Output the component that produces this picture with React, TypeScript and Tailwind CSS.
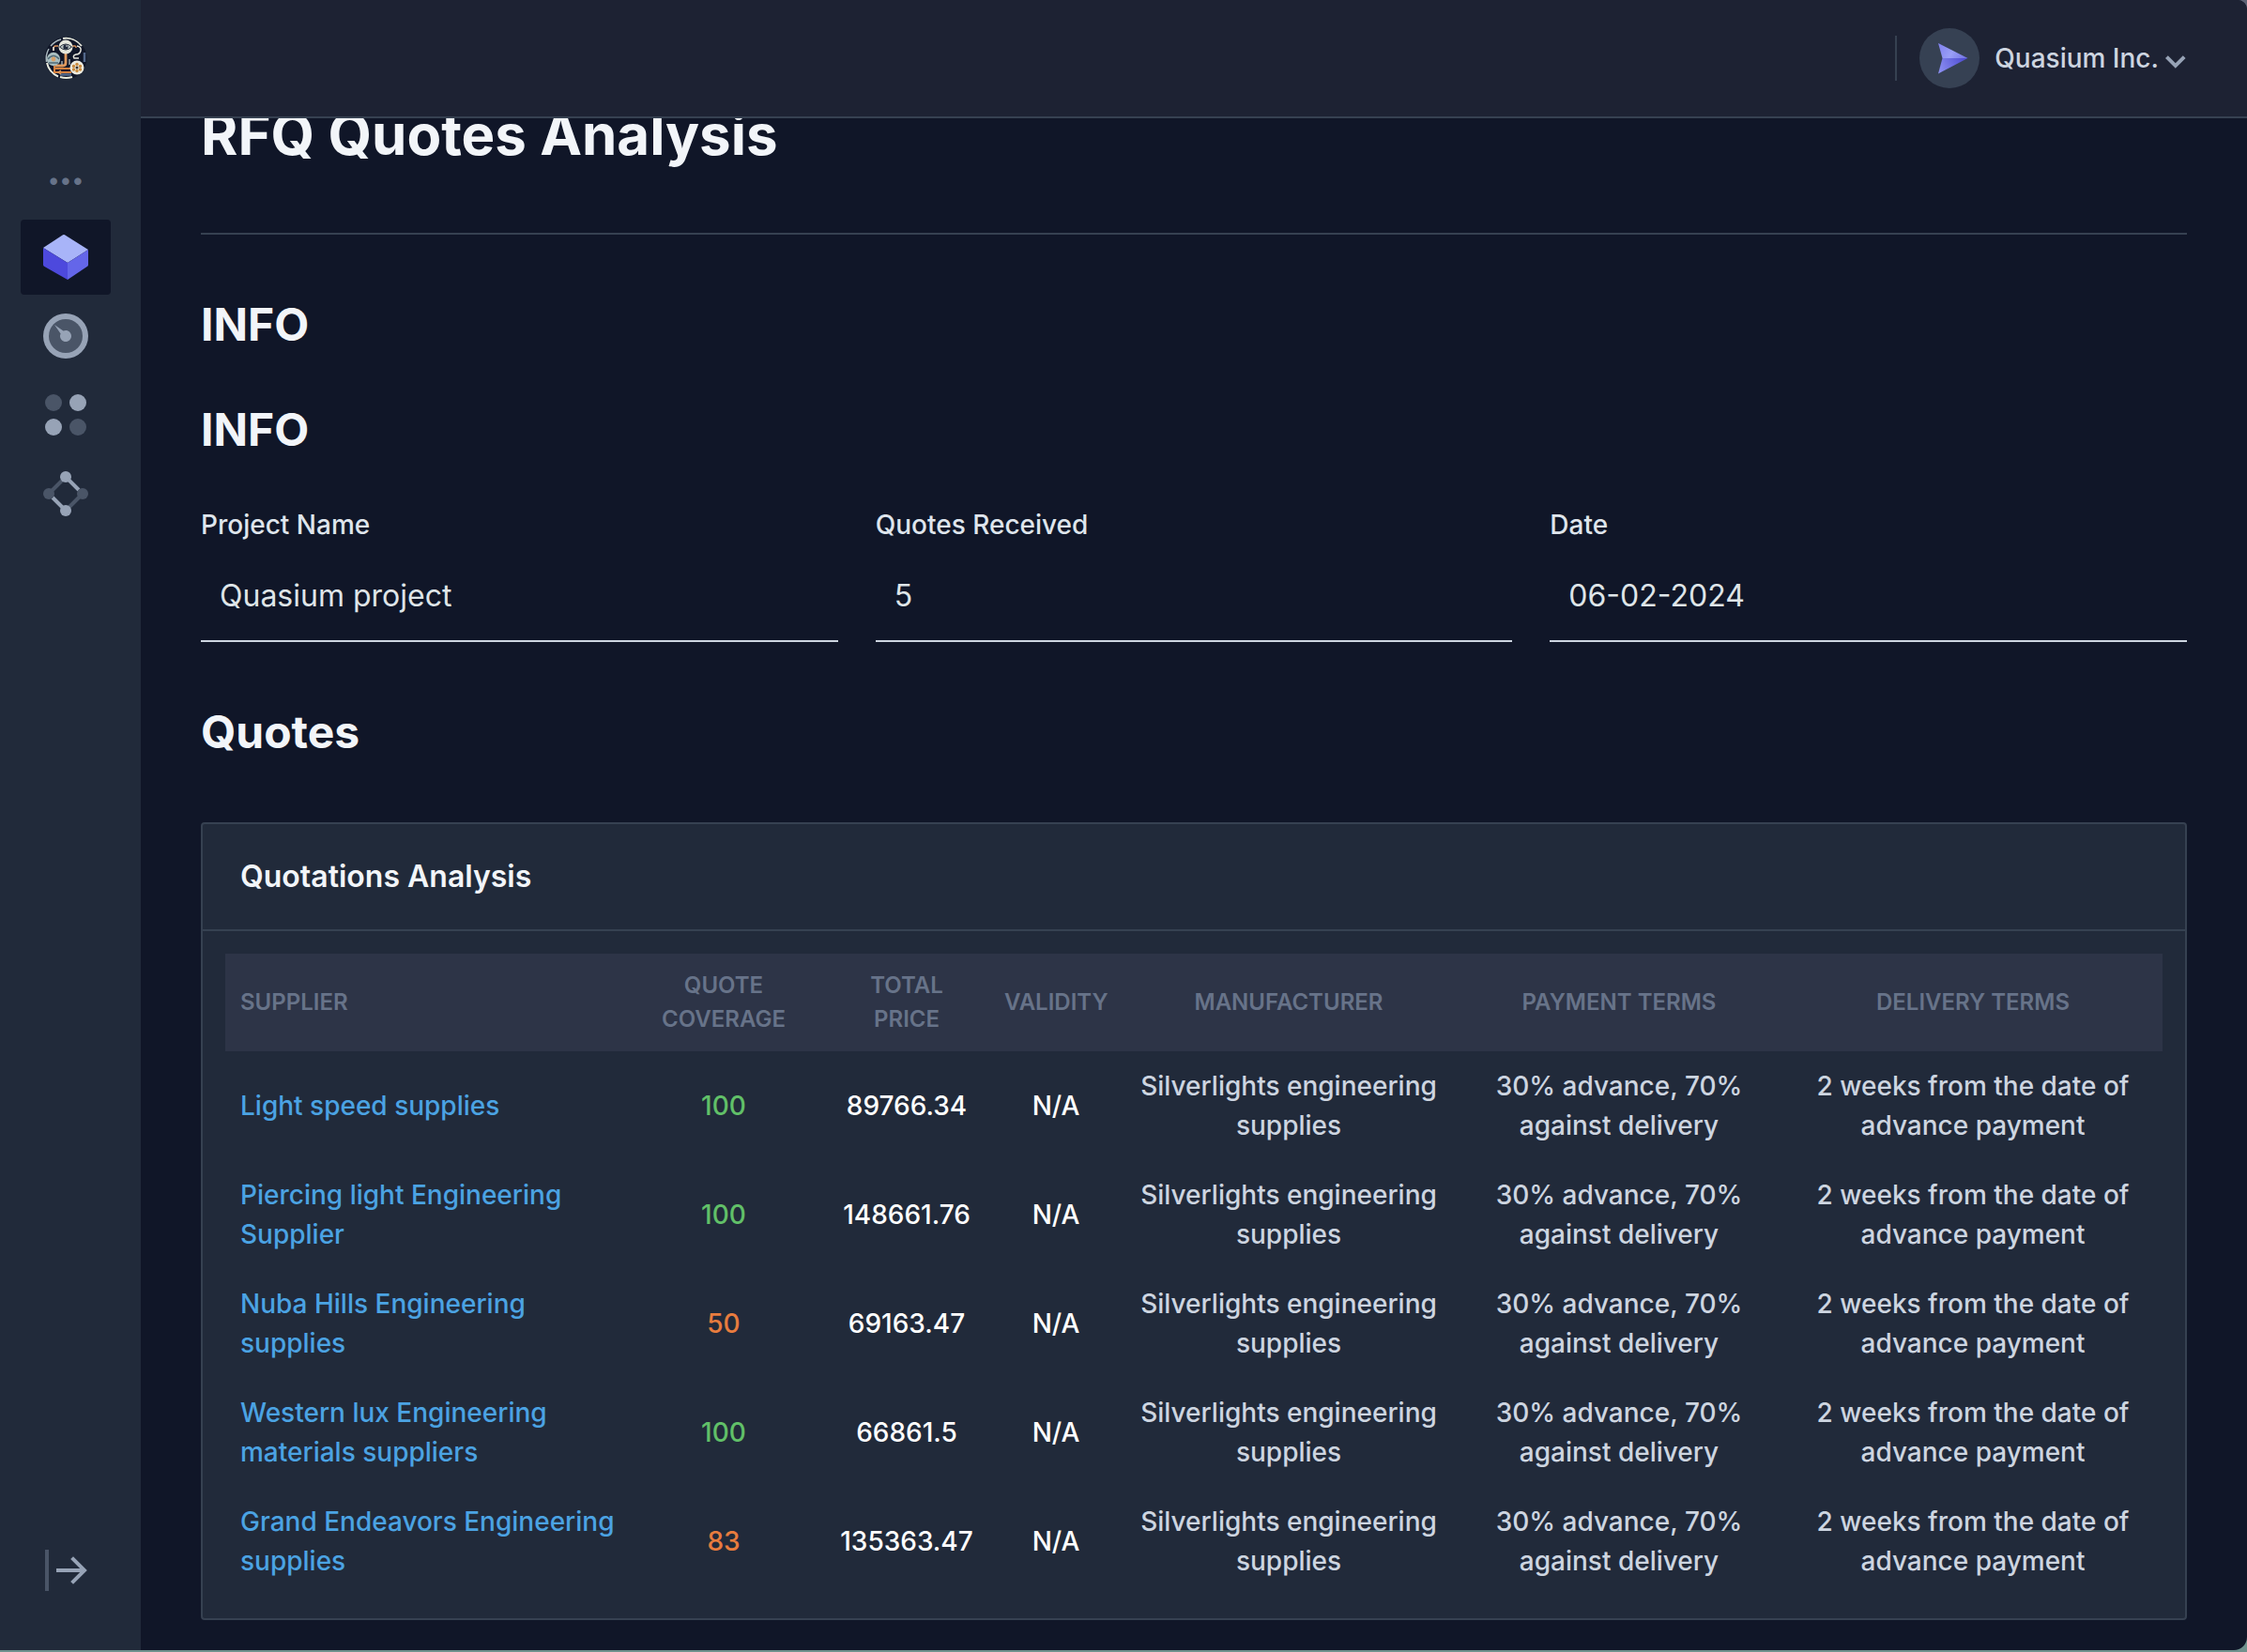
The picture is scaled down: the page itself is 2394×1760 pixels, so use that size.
import React from "react";

type Quote = {
  supplier: string;
  coverage: number;
  price: string;
};

const quotes: Quote[] = [
  { supplier: "Light speed supplies", coverage: 100, price: "89766.34" },
  { supplier: "Piercing light Engineering Supplier", coverage: 100, price: "148661.76" },
  { supplier: "Nuba Hills Engineering supplies", coverage: 50, price: "69163.47" },
  { supplier: "Western lux Engineering materials suppliers", coverage: 100, price: "66861.5" },
  { supplier: "Grand Endeavors Engineering supplies", coverage: 83, price: "135363.47" },
];

const headings = ["Quote Coverage", "Total Price", "Validity", "Manufacturer", "Payment Terms", "Delivery Terms"];

const fields = [
  { id: "project", label: "Project Name", value: "Quasium project" },
  { id: "received", label: "Quotes Received", value: "5" },
  { id: "date", label: "Date", value: "06-02-2024" },
];

function Logo() {
  return (
    <svg className="size-12" viewBox="0 0 48 48" fill="none" aria-hidden="true">
      <circle cx="24" cy="24" r="22.5" fill="#101628" />
      <path d="M19 4A21 21 0 0 0 8 11M6 14A21 21 0 0 0 3.500 28" stroke="#a9b8bd" strokeWidth="1.500" />
      <path d="M21 3A21 21 0 0 1 41 11" stroke="#e9ecdf" strokeWidth="1.800" />
      <path d="M4 29A21 21 0 0 0 16 43.500" stroke="#e9ecdf" strokeWidth="2" />
      <path d="M18 44A21 21 0 0 0 31 44" stroke="#e9ecdf" strokeWidth="2" />
      <path d="M18 41.500h12M44 18v10" stroke="#53688a" strokeWidth="2.500" />
      <path d="M16 11h-3q-2 0-2 5M31 11h3q1 0 1 2" stroke="#d9925a" strokeWidth="1.500" />
      <path d="M11 12v4M36 11q5 1 4 5t-5 4q-4 1-2 4h5" stroke="#e6e5dc" strokeWidth="1.500" />
      <path d="M24 18v11q0 3-3 3h-8" stroke="#e0995d" strokeWidth="2.800" />
      <path d="M12 32v3h18M12 34v5h18" stroke="#d5813f" strokeWidth="2" />
      <path d="M28 25v6M20 27v4" stroke="#bfc9c9" strokeWidth="1.200" />
      <path d="M19 37l-3 2 3 2" stroke="#e0995d" strokeWidth="1.500" />
      <circle cx="24" cy="12" r="7.500" fill="#e4e6dc" />
      <path d="M17.500 12q6.500-6 13 0q-6.500 6-13 0z" fill="#b9c3c0" stroke="#2b3440" strokeWidth="1" />
      <circle cx="24" cy="12" r="2.600" fill="#202a3c" />
      <circle cx="25" cy="11" r="0.800" fill="#fff" />
      <circle cx="11" cy="25" r="7.200" fill="#a9bec0" />
      <path d="M5 25q6-7 12 0M6 29h10" stroke="#4f6a76" strokeWidth="1.300" />
      <circle cx="11" cy="25" r="2.400" fill="#d6a06a" />
      <circle cx="36" cy="34" r="7.500" fill="#ecebdf" />
      <g fill="#c98b3f">
        <circle cx="36" cy="30.500" r="1.700" />
        <circle cx="36" cy="37.500" r="1.700" />
        <circle cx="32.500" cy="32.500" r="1.700" />
        <circle cx="39.500" cy="32.500" r="1.700" />
        <circle cx="32.500" cy="36" r="1.700" />
        <circle cx="39.500" cy="36" r="1.700" />
      </g>
      <circle cx="36" cy="34" r="1.500" fill="#3a3630" />
    </svg>
  );
}

function CubeIcon() {
  return (
    <svg className="size-12" viewBox="0 0 24 24" aria-hidden="true">
      <path fill="#a8b4f8" d="M13 15l11-7L11.504.136a1 1 0 00-1.019.007L0 7l13 8z" />
      <path fill="#4d49dd" d="M13 15L0 7v9c0 .355.189.685.496.864L13 24v-9z" />
      <path fill="#6466e9" d="M13 15.047V24l10.573-7.181A.999.999 0 0024 16V8l-11 7.047z" />
    </svg>
  );
}

function GaugeIcon() {
  return (
    <svg className="size-12" viewBox="0 0 24 24" aria-hidden="true">
      <circle cx="12" cy="12" r="12" fill="#97a3b6" />
      <circle cx="12" cy="12" r="9" fill="#4a5567" />
      <path
        fill="#97a3b6"
        d="M12 15c-1.654 0-3-1.346-3-3 0-.462.113-.894.3-1.285L6 6l4.714 3.301A2.973 2.973 0 0112 9c1.654 0 3 1.346 3 3s-1.346 3-3 3z"
      />
    </svg>
  );
}

function DotsIcon() {
  return (
    <svg className="size-12" viewBox="0 0 24 24" aria-hidden="true">
      <circle cx="5.500" cy="5.500" r="4.500" fill="#4a5567" />
      <circle cx="18.500" cy="5.500" r="4.500" fill="#97a3b6" />
      <circle cx="5.500" cy="18.500" r="4.500" fill="#97a3b6" />
      <circle cx="18.500" cy="18.500" r="4.500" fill="#4a5567" />
    </svg>
  );
}

function NodesIcon() {
  return (
    <svg className="size-12" viewBox="0 0 24 24" aria-hidden="true">
      <path d="M3 12l9-9M12 21l9-9" stroke="#4a5567" strokeWidth="2" />
      <path d="M12 3l7 7M5 14l7 7" stroke="#97a3b6" strokeWidth="2" />
      <circle cx="3" cy="12" r="3" fill="#4a5567" />
      <circle cx="21" cy="12" r="3" fill="#4a5567" />
      <circle cx="12" cy="3" r="3" fill="#97a3b6" />
      <circle cx="12" cy="21" r="3" fill="#97a3b6" />
    </svg>
  );
}

function ExpandIcon() {
  return (
    <svg className="size-12" viewBox="0 0 24 24" aria-hidden="true">
      <path fill="#97a3b6" d="M19.586 11l-5-5L16 4.586 23.414 12 16 19.414 14.586 18l5-5H7v-2z" />
      <path fill="#4a5567" d="M3 23H1V1h2z" />
    </svg>
  );
}

function Avatar() {
  return (
    <svg className="size-16" viewBox="0 0 64 64" aria-hidden="true">
      <defs>
        <linearGradient id="wing" x1="20" y1="16" x2="51" y2="32" gradientUnits="userSpaceOnUse">
          <stop stopColor="#7f80ee" />
          <stop offset="0.500" stopColor="#9a9ff7" />
          <stop offset="1" stopColor="#6f70e0" />
        </linearGradient>
        <linearGradient id="keel" x1="20" y1="48" x2="51" y2="32" gradientUnits="userSpaceOnUse">
          <stop stopColor="#8f93f3" />
          <stop offset="1" stopColor="#4a47cf" />
        </linearGradient>
      </defs>
      <circle cx="32" cy="32" r="32" fill="#364153" />
      <path d="M20 16l31.500 16H24.500z" fill="url(#wing)" />
      <path d="M20 48.500L51.500 32H24.500z" fill="url(#keel)" />
    </svg>
  );
}

const navItem = "flex h-20 w-24 items-center justify-center rounded";

function Sidebar() {
  return (
    <aside className="flex w-[150px] shrink-0 flex-col items-center bg-[#212a3a] pr-2.5 pt-[38px] pb-[61px]">
      <a href="#home" aria-label="Home">
        <Logo />
      </a>
      <div className="mt-[88px] text-2xl leading-9 font-medium text-[#677389]" aria-hidden="true">
        •••
      </div>
      <nav className="mt-6 flex flex-col gap-1" aria-label="Main">
        <a href="#quotes" aria-label="Quotes" aria-current="page" className={`${navItem} bg-[#101628]`}>
          <CubeIcon />
        </a>
        <a href="#dashboard" aria-label="Dashboard" className={navItem}>
          <GaugeIcon />
        </a>
        <a href="#apps" aria-label="Apps" className={navItem}>
          <DotsIcon />
        </a>
        <a href="#integrations" aria-label="Integrations" className={navItem}>
          <NodesIcon />
        </a>
      </nav>
      <button type="button" aria-label="Expand sidebar" className="mt-auto">
        <ExpandIcon />
      </button>
    </aside>
  );
}

function Header() {
  return (
    <header className="relative z-10 flex h-[126px] items-center justify-end border-b-2 border-[#364151] bg-[#1d2233] px-16">
      <div className="h-12 w-0.5 bg-[#364151]" />
      <button type="button" className="ml-6 flex items-center">
        <Avatar />
        <span className="ml-4 text-[28px] leading-[42px] font-medium text-[#cdd5e0]">Quasium Inc.</span>
        <svg className="ml-1.5 size-6" viewBox="0 0 12 12" fill="#97a3b6" aria-hidden="true">
          <path d="M5.900 11.400L.5 6l1.400-1.400 4 4 4-4L11.300 6z" />
        </svg>
      </button>
    </header>
  );
}

const subheading = "text-5xl leading-[64px] font-bold text-[#f2f5f9]";

function QuotesTable() {
  return (
    <section className="mt-16 rounded-[4px] border-2 border-[#364151] bg-[#212a3a]">
      <h3 className="border-b-2 border-[#364151] px-10 py-8 text-[32px] leading-[48px] font-semibold text-[#f2f5f9]">
        Quotations Analysis
      </h3>
      <div className="p-6">
        <table className="w-full table-fixed text-[28px] leading-[42px] font-medium">
          <colgroup>
            <col className="w-[424px]" />
            <col className="w-[214px]" />
            <col className="w-[176px]" />
            <col className="w-[142px]" />
            <col className="w-[354px]" />
            <col className="w-[350px]" />
            <col className="w-[404px]" />
          </colgroup>
          <thead className="bg-[#2d3447] text-2xl leading-9 text-[#677389] uppercase">
            <tr>
              <th scope="col" className="p-4 text-left font-semibold">
                Supplier
              </th>
              {headings.map((h) => (
                <th key={h} scope="col" className="p-4 text-center font-semibold">
                  {h}
                </th>
              ))}
            </tr>
          </thead>
          <tbody className="text-center text-[#cdd5e0]">
            {quotes.map((q) => (
              <tr key={q.supplier}>
                <td className="py-4 pl-4 text-left">
                  <a href="#supplier" className="text-[#4ba3e3]">
                    {q.supplier}
                  </a>
                </td>
                <td className={q.coverage === 100 ? "p-4 text-[#61c068]" : "p-4 text-[#e87c3e]"}>{q.coverage}</td>
                <td className="p-4 text-white">{q.price}</td>
                <td className="p-4 text-white">N/A</td>
                <td className="p-4">Silverlights engineering supplies</td>
                <td className="p-4">30% advance, 70% against delivery</td>
                <td className="p-4">2 weeks from the date of advance payment</td>
              </tr>
            ))}
          </tbody>
        </table>
      </div>
    </section>
  );
}

export default function App() {
  return (
    <div className="min-h-screen bg-linear-to-b from-[#5d6375] to-[#6f918d] pb-0.5 font-['Inter',sans-serif] antialiased">
      <div className="flex min-h-[calc(100vh-2px)] overflow-hidden rounded-tr-[10px] rounded-br-[14px] bg-[#101628]">
        <Sidebar />
        <div className="flex min-w-0 flex-1 flex-col">
          <Header />
          <main className="-mt-[23px] px-16">
            <h1 className="border-b-2 border-[#364151] pb-[65px] text-6xl leading-[80px] font-bold text-[#f2f5f9]">
              RFQ Quotes Analysis
            </h1>
            <h2 className={`mt-16 ${subheading}`}>INFO</h2>
            <h2 className={`mt-12 ${subheading}`}>INFO</h2>
            <div className="mt-12 grid grid-cols-3 gap-10">
              {fields.map((f) => (
                <div key={f.id}>
                  <label htmlFor={f.id} className="block text-[28px] leading-[42px] font-medium text-[#dfe5ec]">
                    {f.label}
                  </label>
                  <input
                    id={f.id}
                    defaultValue={f.value}
                    className="mt-2 block w-full border-b-2 border-[#cdd5e0] bg-transparent px-5 py-[23px] text-[32px] leading-[48px] text-[#dfe5e8] outline-none"
                  />
                </div>
              ))}
            </div>
            <h2 className={`mt-16 ${subheading}`}>Quotes</h2>
            <QuotesTable />
          </main>
        </div>
      </div>
    </div>
  );
}
